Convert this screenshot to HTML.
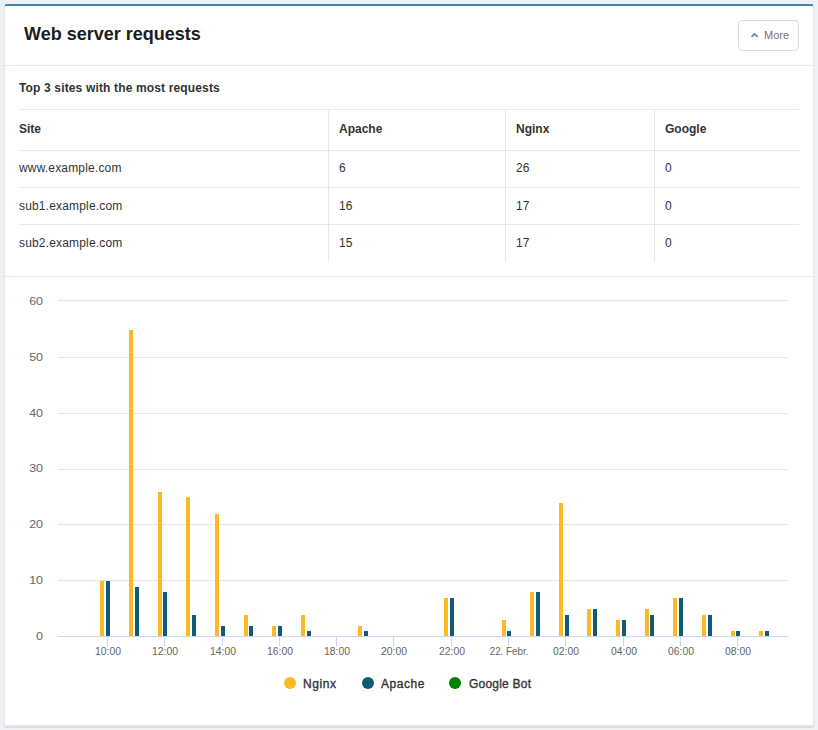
<!DOCTYPE html>
<html><head><meta charset="utf-8"><style>
html,body{margin:0;padding:0;}
body{width:818px;height:730px;background:#eef1f4;position:relative;overflow:hidden;font-family:"Liberation Sans",sans-serif;}
.card{position:absolute;left:4px;top:4px;width:808px;height:719px;background:#fff;border:1px solid #e3e6ea;border-top:2px solid #4580ae;border-bottom:2px solid #e4e6ea;border-radius:3px;box-shadow:0 1px 0 #d6d8dc;}
.t{position:absolute;white-space:nowrap;}
.title{font-size:18px;line-height:20px;font-weight:bold;color:#1c1c1c;}
.sub{font-size:12px;line-height:14px;font-weight:bold;color:#333;letter-spacing:0.15px;}
.th{font-size:12px;line-height:14px;font-weight:bold;color:#333;}
.td{font-size:12px;line-height:14px;color:#333;letter-spacing:0.17px;}
.hl{position:absolute;height:1px;background:#e6e8e9;}
.vl{position:absolute;width:1px;background:#e6e8e9;}
.sep{position:absolute;height:1px;background:#e6e8ec;}
.btn{position:absolute;left:738px;top:20px;width:59px;height:29px;border:1px solid #dcdcdc;border-radius:4px;background:#fff;}
.btn span{position:absolute;left:25px;top:8px;font-size:11px;line-height:13px;color:#737373;}
svg{position:absolute;left:0;top:0;}
.xl{font-family:"Liberation Sans",sans-serif;font-size:10px;fill:#666;}
.yl{font-family:"Liberation Sans",sans-serif;font-size:11px;fill:#666;}
.lg{font-size:12px;line-height:14px;color:#333;-webkit-text-stroke:0.35px #333;letter-spacing:0.55px;}
</style></head><body>
<div class="card"></div>
<div class="t title" style="left:24px;top:24px">Web server requests</div>
<div class="btn"><svg width="10" height="8" style="left:11px;top:11px"><path d="M1.5 4.9 L4.6 1.9 L7.7 4.9" fill="none" stroke="#5587b5" stroke-width="1.55"/></svg><span>More</span></div>
<div class="sep" style="left:5px;top:65px;width:808px"></div>
<div class="t sub" style="left:19px;top:81px">Top 3 sites with the most requests</div>
<div class="hl" style="left:19px;top:109px;width:780px"></div>
<div class="hl" style="left:19px;top:150px;width:780px"></div>
<div class="hl" style="left:19px;top:187px;width:780px"></div>
<div class="hl" style="left:19px;top:224px;width:780px"></div>
<div class="vl" style="left:328px;top:110px;height:152px"></div>
<div class="vl" style="left:505px;top:110px;height:152px"></div>
<div class="vl" style="left:654px;top:110px;height:152px"></div>
<div class="t td" style="left:19px;top:161px">www.example.com</div>
<div class="t td" style="left:339px;top:161px">6</div>
<div class="t td" style="left:516px;top:161px">26</div>
<div class="t td" style="left:665px;top:161px">0</div>
<div class="t td" style="left:19px;top:199px">sub1.example.com</div>
<div class="t td" style="left:339px;top:199px">16</div>
<div class="t td" style="left:516px;top:199px">17</div>
<div class="t td" style="left:665px;top:199px">0</div>
<div class="t td" style="left:19px;top:236px">sub2.example.com</div>
<div class="t td" style="left:339px;top:236px">15</div>
<div class="t td" style="left:516px;top:236px">17</div>
<div class="t td" style="left:665px;top:236px">0</div>
<div class="t th" style="left:19px;top:122px">Site</div>
<div class="t th" style="left:339px;top:122px">Apache</div>
<div class="t th" style="left:516px;top:122px">Nginx</div>
<div class="t th" style="left:665px;top:122px">Google</div>
<div class="sep" style="left:5px;top:276px;width:808px"></div>
<svg width="818" height="730" shape-rendering="crispEdges">
<rect x="58" y="300" width="730" height="1" fill="#e6e6e6"/>
<rect x="58" y="357" width="730" height="1" fill="#e6e6e6"/>
<rect x="58" y="413" width="730" height="1" fill="#e6e6e6"/>
<rect x="58" y="469" width="730" height="1" fill="#e6e6e6"/>
<rect x="58" y="524" width="730" height="1" fill="#e6e6e6"/>
<rect x="58" y="580" width="730" height="1" fill="#e6e6e6"/>
<rect x="100" y="581" width="4" height="56" fill="#fcb826"/>
<rect x="129" y="330" width="4" height="307" fill="#fcb826"/>
<rect x="158" y="492" width="4" height="145" fill="#fcb826"/>
<rect x="186" y="497" width="4" height="140" fill="#fcb826"/>
<rect x="215" y="514" width="4" height="123" fill="#fcb826"/>
<rect x="244" y="615" width="4" height="22" fill="#fcb826"/>
<rect x="272" y="626" width="4" height="11" fill="#fcb826"/>
<rect x="301" y="615" width="4" height="22" fill="#fcb826"/>
<rect x="358" y="626" width="4" height="11" fill="#fcb826"/>
<rect x="444" y="598" width="4" height="39" fill="#fcb826"/>
<rect x="502" y="620" width="4" height="17" fill="#fcb826"/>
<rect x="530" y="592" width="4" height="45" fill="#fcb826"/>
<rect x="559" y="503" width="4" height="134" fill="#fcb826"/>
<rect x="587" y="609" width="4" height="28" fill="#fcb826"/>
<rect x="616" y="620" width="4" height="17" fill="#fcb826"/>
<rect x="645" y="609" width="4" height="28" fill="#fcb826"/>
<rect x="673" y="598" width="4" height="39" fill="#fcb826"/>
<rect x="702" y="615" width="4" height="22" fill="#fcb826"/>
<rect x="731" y="631" width="4" height="6" fill="#fcb826"/>
<rect x="759" y="631" width="4" height="6" fill="#fcb826"/>
<rect x="106" y="581" width="4" height="56" fill="#125a78"/>
<rect x="135" y="587" width="4" height="50" fill="#125a78"/>
<rect x="163" y="592" width="4" height="45" fill="#125a78"/>
<rect x="192" y="615" width="4" height="22" fill="#125a78"/>
<rect x="221" y="626" width="4" height="11" fill="#125a78"/>
<rect x="249" y="626" width="4" height="11" fill="#125a78"/>
<rect x="278" y="626" width="4" height="11" fill="#125a78"/>
<rect x="307" y="631" width="4" height="6" fill="#125a78"/>
<rect x="364" y="631" width="4" height="6" fill="#125a78"/>
<rect x="450" y="598" width="4" height="39" fill="#125a78"/>
<rect x="507" y="631" width="4" height="6" fill="#125a78"/>
<rect x="536" y="592" width="4" height="45" fill="#125a78"/>
<rect x="565" y="615" width="4" height="22" fill="#125a78"/>
<rect x="593" y="609" width="4" height="28" fill="#125a78"/>
<rect x="622" y="620" width="4" height="17" fill="#125a78"/>
<rect x="650" y="615" width="4" height="22" fill="#125a78"/>
<rect x="679" y="598" width="4" height="39" fill="#125a78"/>
<rect x="708" y="615" width="4" height="22" fill="#125a78"/>
<rect x="736" y="631" width="4" height="6" fill="#125a78"/>
<rect x="765" y="631" width="4" height="6" fill="#125a78"/>
<rect x="58" y="636" width="730" height="1" fill="#ccd6eb"/>
<rect x="107" y="637" width="1" height="9" fill="#ccd6eb"/>
<text transform="translate(108,655) scale(1.04,1)" text-anchor="middle" class="xl">10:00</text>
<rect x="164" y="637" width="1" height="9" fill="#ccd6eb"/>
<text transform="translate(165,655) scale(1.04,1)" text-anchor="middle" class="xl">12:00</text>
<rect x="222" y="637" width="1" height="9" fill="#ccd6eb"/>
<text transform="translate(223,655) scale(1.04,1)" text-anchor="middle" class="xl">14:00</text>
<rect x="279" y="637" width="1" height="9" fill="#ccd6eb"/>
<text transform="translate(280,655) scale(1.04,1)" text-anchor="middle" class="xl">16:00</text>
<rect x="336" y="637" width="1" height="9" fill="#ccd6eb"/>
<text transform="translate(337,655) scale(1.04,1)" text-anchor="middle" class="xl">18:00</text>
<rect x="393" y="637" width="1" height="9" fill="#ccd6eb"/>
<text transform="translate(394,655) scale(1.04,1)" text-anchor="middle" class="xl">20:00</text>
<rect x="451" y="637" width="1" height="9" fill="#ccd6eb"/>
<text transform="translate(452,655) scale(1.04,1)" text-anchor="middle" class="xl">22:00</text>
<rect x="508" y="637" width="1" height="9" fill="#ccd6eb"/>
<text transform="translate(509,655) scale(0.98,1)" text-anchor="middle" class="xl">22. Febr.</text>
<rect x="565" y="637" width="1" height="9" fill="#ccd6eb"/>
<text transform="translate(566,655) scale(1.04,1)" text-anchor="middle" class="xl">02:00</text>
<rect x="623" y="637" width="1" height="9" fill="#ccd6eb"/>
<text transform="translate(624,655) scale(1.04,1)" text-anchor="middle" class="xl">04:00</text>
<rect x="680" y="637" width="1" height="9" fill="#ccd6eb"/>
<text transform="translate(681,655) scale(1.04,1)" text-anchor="middle" class="xl">06:00</text>
<rect x="737" y="637" width="1" height="9" fill="#ccd6eb"/>
<text transform="translate(738,655) scale(1.04,1)" text-anchor="middle" class="xl">08:00</text>
<text transform="translate(43,305) scale(1.13,1)" text-anchor="end" class="yl">60</text>
<text transform="translate(43,361) scale(1.13,1)" text-anchor="end" class="yl">50</text>
<text transform="translate(43,417) scale(1.13,1)" text-anchor="end" class="yl">40</text>
<text transform="translate(43,472) scale(1.13,1)" text-anchor="end" class="yl">30</text>
<text transform="translate(43,528) scale(1.13,1)" text-anchor="end" class="yl">20</text>
<text transform="translate(43,584) scale(1.13,1)" text-anchor="end" class="yl">10</text>
<text transform="translate(43,640) scale(1.13,1)" text-anchor="end" class="yl">0</text>
<circle cx="290" cy="683" r="6" fill="#fcb826" shape-rendering="auto"/>
<circle cx="368" cy="683" r="6" fill="#125a78" shape-rendering="auto"/>
<circle cx="455" cy="683" r="6" fill="#008000" shape-rendering="auto"/>
</svg>
<div class="t lg" style="left:303px;top:677px">Nginx</div>
<div class="t lg" style="left:381px;top:677px">Apache</div>
<div class="t lg" style="left:469px;top:677px;letter-spacing:0.22px">Google Bot</div>
</body></html>
